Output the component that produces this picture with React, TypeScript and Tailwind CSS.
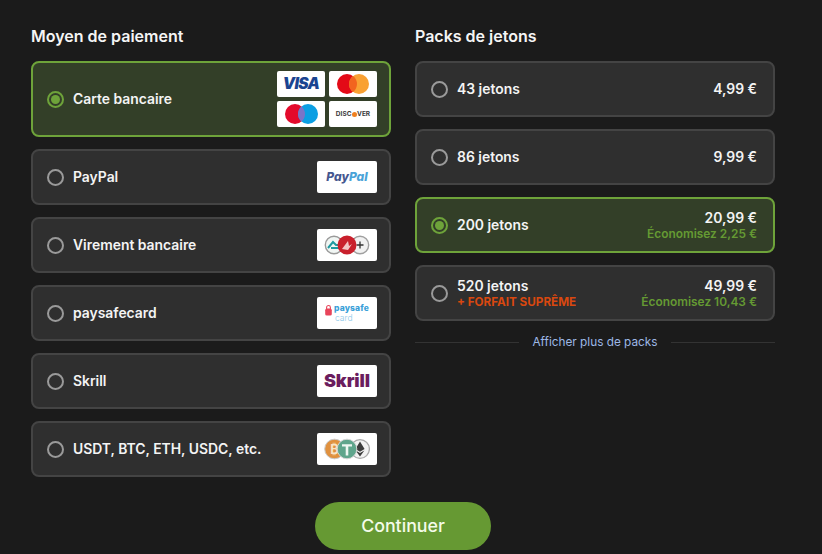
import React from "react";

const Radio = ({ on }: { on?: boolean }) => (
  <span className={`flex h-[17px] w-[17px] shrink-0 items-center justify-center rounded-full border-2 ${on ? "border-[#6ea33a]" : "border-[#9a9a9a]"}`}>
    {on && <span className="h-[9px] w-[9px] rounded-full bg-[#6ea33a]" />}
  </span>
);

const Logo = ({ children, small }: { children: React.ReactNode; small?: boolean }) => (
  <span className={`flex items-center justify-center rounded-[2px] bg-white ${small ? "h-[26px] w-[48px]" : "h-[32px] w-[60px]"}`}>{children}</span>
);

const Cards = () => (
  <div className="grid grid-cols-[48px_48px] gap-x-[4px] gap-y-[4px]">
    <Logo small>
      <span className="text-[15.5px] font-black italic leading-none tracking-[-0.6px] text-[#1a4490]">VISA</span>
    </Logo>
    <Logo small>
      <svg width="32" height="20" viewBox="0 0 32 20">
        <circle cx="10" cy="10" r="10" fill="#e30a17" />
        <circle cx="22" cy="10" r="10" fill="#f9a133" />
        <path d="M16 2a10 10 0 0 1 0 16a10 10 0 0 1 0-16z" fill="#f2641f" />
      </svg>
    </Logo>
    <Logo small>
      <svg width="33" height="20" viewBox="0 0 33 20">
        <circle cx="10" cy="10" r="10" fill="#e30a2b" />
        <circle cx="23" cy="10" r="10" fill="#0b9fe3" />
        <path d="M16.5 2.4a10 10 0 0 1 0 15.2a10 10 0 0 1 0-15.2z" fill="#7a74c8" />
      </svg>
    </Logo>
    <Logo small>
      <span className="flex items-center text-[6.5px] font-bold leading-none text-[#3a3a3a]">
        DISC<span className="mx-[0.3px] inline-block h-[5px] w-[5px] rounded-full bg-[#f08020]" />VER
      </span>
    </Logo>
  </div>
);

const PayPal = () => (
  <Logo>
    <span className="text-[12px] font-extrabold italic leading-none">
      <span className="text-[#46578f]">Pay</span>
      <span className="text-[#4aa3d8]">Pal</span>
    </span>
  </Logo>
);

const Bank = () => (
  <Logo>
    <svg width="46" height="20" viewBox="0 0 46 20">
      <circle cx="10" cy="10" r="8.7" fill="#f1f6f4" stroke="#9a9a9a" strokeWidth="1.4" />
      <path d="M4 13l5-6 3 3h6M7 13h9" fill="none" stroke="#1f9aa0" strokeWidth="2" />
      <circle cx="36" cy="10" r="8.7" fill="#f1f1f1" stroke="#a0a0a0" strokeWidth="1.4" />
      <path d="M32.5 10h7M36 6.5v7" stroke="#333" strokeWidth="1.3" />
      <circle cx="23" cy="10" r="9.5" fill="#c9202c" />
      <path d="M18 14l6-8 1 5 3-2-4 6z" fill="#f3c5c5" />
    </svg>
  </Logo>
);

const Paysafe = () => (
  <Logo>
    <span className="flex items-center gap-[2px]">
      <svg width="7" height="12" viewBox="0 0 7 12" className="-mt-[6px]">
        <path d="M1.6 5V3.4a1.9 1.9 0 0 1 3.8 0V5" fill="none" stroke="#e8445a" strokeWidth="1.1" />
        <rect x="0.2" y="4.6" width="6.6" height="7" rx="1.6" fill="#e8445a" />
      </svg>
      <span className="flex flex-col">
        <span className="text-[8.5px] font-extrabold leading-[10.5px] tracking-[0.15px] text-[#3aa0d8]">paysafe</span>
        <span className="ml-[1px] text-[8.5px] font-light leading-[10.5px] text-[#8cc8e8]">card</span>
      </span>
    </span>
  </Logo>
);

const Skrill = () => (
  <Logo>
    <span className="text-[18px] font-black leading-none tracking-[-0.1px] text-[#6b1d5e]">Skrill</span>
  </Logo>
);

const Crypto = () => (
  <Logo>
    <svg width="46" height="22" viewBox="0 0 46 22">
      <circle cx="10.5" cy="11" r="9.8" fill="#e0913f" stroke="#c9c9c9" />
      <text x="10.5" y="15.5" textAnchor="middle" fontSize="13" fontWeight="700" fill="#f8e4c8" fontFamily="Inter, sans-serif">₿</text>
      <circle cx="36" cy="11" r="9.4" fill="#f2f2f2" stroke="#a8a8a8" strokeWidth="1.3" />
      <path d="M36 3.5l-4.6 7.6 4.6 2.7 4.6-2.7zM31.6 12.4l4.4 6.1 4.4-6.1-4.4 2.6z" fill="#3d3d3d" />
      <circle cx="23" cy="11" r="9.8" fill="#5fa58c" stroke="#d5d5d5" />
      <path d="M18 6.3h10v2.2h-3.7v9h-2.6v-9H18z" fill="#eef6f2" />
    </svg>
  </Logo>
);

const cardBase = "flex items-center rounded-[8px] border-2 pl-[14px]";
const off = "border-[#444444] bg-[#2f2f2f]";
const onCls = "border-[#6ea33a] bg-[#333f28]";

const methods: { name: string; logo: React.ReactNode; on?: boolean }[] = [
  { name: "Carte bancaire", logo: <Cards />, on: true },
  { name: "PayPal", logo: <PayPal /> },
  { name: "Virement bancaire", logo: <Bank /> },
  { name: "paysafecard", logo: <Paysafe /> },
  { name: "Skrill", logo: <Skrill /> },
  { name: "USDT, BTC, ETH, USDC, etc.", logo: <Crypto /> },
];

const packs: { name: string; price: string; save?: string; extra?: string; on?: boolean }[] = [
  { name: "43 jetons", price: "4,99 €" },
  { name: "86 jetons", price: "9,99 €" },
  { name: "200 jetons", price: "20,99 €", save: "Économisez 2,25 €", on: true },
  { name: "520 jetons", price: "49,99 €", save: "Économisez 10,43 €", extra: "+ FORFAIT SUPRÊME" },
];

export default function App() {
  return (
    <div className="h-[554px] w-[822px] overflow-hidden bg-[#1b1b1b] font-['Inter',sans-serif] text-white">
      <div className="flex gap-[24px] pl-[31px] pt-[26px]">
        <section className="w-[360px]">
          <h2 className="mb-[15px] h-[20px] text-[16px] font-semibold leading-[20px] text-[#f5f5f5]">Moyen de paiement</h2>
          <div className="flex flex-col gap-[12px]">
            {methods.map((m) => (
              <div key={m.name} className={`${cardBase} justify-between pr-[12px] ${m.on ? `h-[76px] ${onCls}` : `h-[56px] ${off}`}`}>
                <div className="flex items-center gap-[9px]">
                  <Radio on={m.on} />
                  <span className="text-[13.9px] font-semibold leading-[20px] text-[#f4f4f4]">{m.name}</span>
                </div>
                {m.logo}
              </div>
            ))}
          </div>
        </section>
        <section className="w-[360px]">
          <h2 className="mb-[15px] h-[20px] text-[16px] font-semibold leading-[20px] text-[#f5f5f5]">Packs de jetons</h2>
          <div className="flex flex-col gap-[12px]">
            {packs.map((p) => (
              <div key={p.name} className={`${cardBase} h-[56px] justify-between pr-[16px] ${p.on ? onCls : off}`}>
                <div className="flex items-center gap-[9px]">
                  <Radio on={p.on} />
                  <div className="flex flex-col">
                    <span className="text-[13.9px] font-semibold leading-[18px] text-[#f4f4f4]">{p.name}</span>
                    {p.extra && <span className="text-[11.7px] font-bold leading-[14px] text-[#d9480f]">{p.extra}</span>}
                  </div>
                </div>
                <div className="flex flex-col items-end">
                  <span className="text-[13.9px] font-semibold leading-[18px] text-[#f4f4f4]">{p.price}</span>
                  {p.save && <span className="text-[11.9px] font-semibold leading-[14px] text-[#659a33]">{p.save}</span>}
                </div>
              </div>
            ))}
          </div>
          <div className="mt-[13px] flex h-[17px] items-center gap-[12px]">
            <span className="h-px flex-1 bg-[#333333]" />
            <span className="px-[1px] text-[11.8px] leading-[17px] text-[#9db8e6]">Afficher plus de packs</span>
            <span className="h-px flex-1 bg-[#333333]" />
          </div>
        </section>
      </div>
      <div className="mt-[25px] flex justify-center pr-[16px]">
        <button className="h-[48px] w-[176px] rounded-[24px] bg-[#669933] text-[17.8px] font-medium leading-[46px] text-[#f4fbe9]">Continuer</button>
      </div>
    </div>
  );
}
